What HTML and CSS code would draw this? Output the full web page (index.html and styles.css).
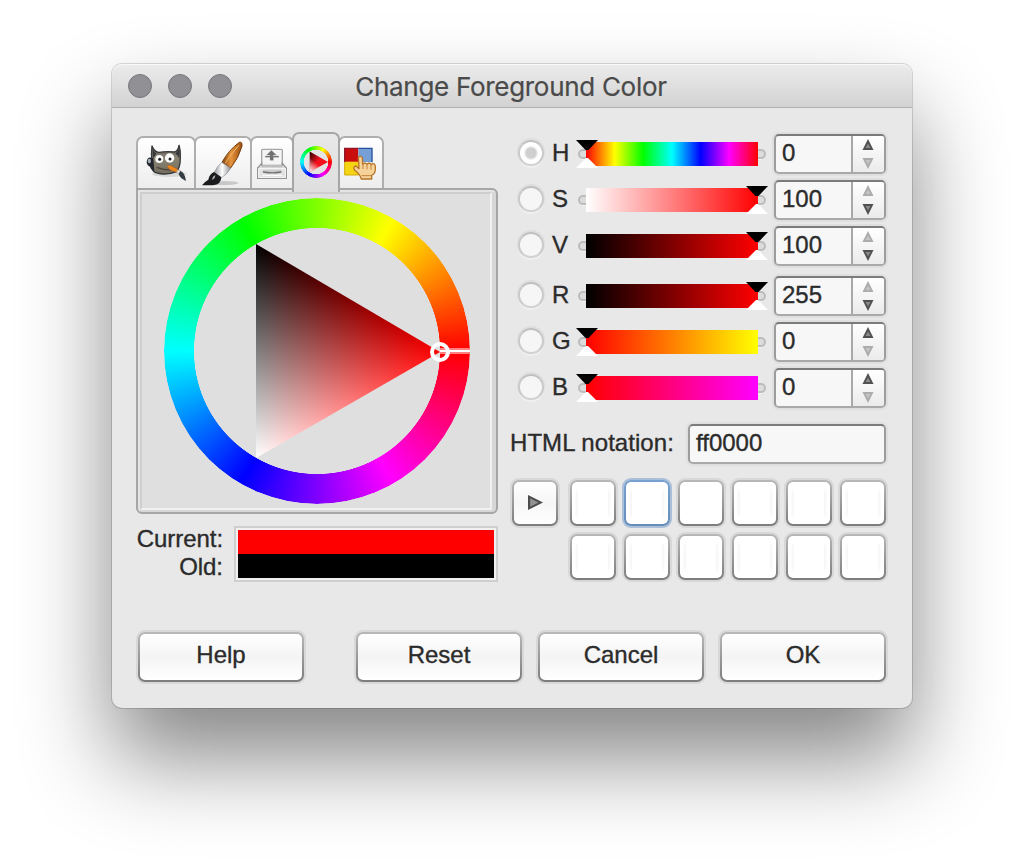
FILE: index.html
```html
<!DOCTYPE html>
<html lang="en">
<head>
<meta charset="utf-8">
<title>Change Foreground Color</title>
<link rel="stylesheet" href="styles.css">
</head>
<body>
<svg class="defs" width="0" height="0" aria-hidden="true">
  <defs>
    <g id="groove"><rect x="2" y="12" width="186" height="8" rx="4" fill="#dcdcdc" stroke="#bcbcbc" stroke-width="2"/><path d="M5 21.500H185" stroke="#f4f4f4" fill="none"/></g>
    <g id="handle"><path d="M0 0H22L12.500 10H9.500Z" fill="#000"/><path d="M0 28H22L12 18H10Z" fill="#fff"/></g>
    <g id="up-on"><path d="M5.500 0L11 11H0Z" fill="#505050"/><path d="M5.500 4.500L8 9H3Z" fill="#8a8a8a"/></g>
    <g id="up-off"><path d="M5.500 0L11 11H0Z" fill="#acacac"/><path d="M5.500 4.500L8 9H3Z" fill="#c4c4c4"/></g>
    <g id="down-on"><path d="M0 0H11L5.500 11Z" fill="#505050"/><path d="M3 2H8L5.500 6.500Z" fill="#8a8a8a"/></g>
    <g id="down-off"><path d="M0 0H11L5.500 11Z" fill="#acacac"/><path d="M3 2H8L5.500 6.500Z" fill="#c4c4c4"/></g>
    <linearGradient id="hue"><stop offset="0" stop-color="#f00"/><stop offset=".1667" stop-color="#ff0"/><stop offset=".3333" stop-color="#0f0"/><stop offset=".5" stop-color="#0ff"/><stop offset=".6667" stop-color="#00f"/><stop offset=".8333" stop-color="#f0f"/><stop offset="1" stop-color="#f00"/></linearGradient>
    <linearGradient id="sat"><stop stop-color="#fff"/><stop offset="1" stop-color="#f00"/></linearGradient>
    <linearGradient id="val"><stop stop-color="#000"/><stop offset="1" stop-color="#f00"/></linearGradient>
    <linearGradient id="green"><stop stop-color="#f00"/><stop offset="1" stop-color="#ff0"/></linearGradient>
    <linearGradient id="blue"><stop stop-color="#f00"/><stop offset="1" stop-color="#f0f"/></linearGradient>
  </defs>
</svg>
<main class="window">
  <header class="titlebar">
    <div class="lights"><i></i><i></i><i></i></div>
    <h1>Change Foreground Color</h1>
  </header>
  <div class="content">
    <div class="columns">
      <section class="left">
        <nav class="tabs">
          <div class="tab tab-gimp">
            <svg width="43" height="40" viewBox="45 50 129 120">
              <defs><linearGradient id="fur" x1="0" y1="0" x2="0" y2="1"><stop stop-color="#55534e"/><stop offset=".45" stop-color="#8a8474"/><stop offset="1" stop-color="#726c5c"/></linearGradient></defs>
              <ellipse cx="118" cy="143" rx="52" ry="9" fill="#000" opacity=".1"/>
              <path d="M66 58Q72 76 86 78Q112 74 134 77Q146 72 147 56Q152 72 151 94Q151 124 139 136Q122 144 98 143Q76 141 70 134Q64 124 66 104Q63 84 66 58Z" fill="url(#fur)" stroke="#38393a" stroke-width="4"/>
              <path d="M68 70L79 83Q70 91 69 99ZM148 68L148 99Q145 86 136 82Z" fill="#34373a"/>
              <path d="M70 96Q51 88 50 108Q51 118 60 121Q64 133 73 134Z" fill="#20262b"/>
              <ellipse cx="58" cy="104" rx="5" ry="7" fill="#a0abb1"/>
              <circle cx="88" cy="98" r="12" fill="#f7f7f5"/>
              <circle cx="119" cy="95" r="14" fill="#fff"/>
              <circle cx="89" cy="99" r="4.500" fill="#1e1e1e"/><circle cx="120" cy="98" r="4.500" fill="#1e1e1e"/>
              <path d="M80 123Q101 131 123 131" stroke="#4a453b" stroke-width="4" fill="none"/>
              <path d="M111 119L121 117L148 132L143 139L119 130Z" fill="#ef861c" stroke="#a64f0b" stroke-width="1"/>
              <path d="M142 131L151 132L154 142L147 144L139 138Z" fill="#d6dadb" stroke="#777" stroke-width="1"/>
              <path d="M151 134Q164 137 168 164Q150 156 146 143Z" fill="#353d42"/>
            </svg>
          </div>
          <div class="tab tab-brush">
            <svg width="44" height="47" viewBox="207 45 132 141">
              <defs><linearGradient id="wood"><stop stop-color="#854311"/><stop offset=".45" stop-color="#e5953c"/><stop offset="1" stop-color="#9a4d13"/></linearGradient><linearGradient id="ferrule"><stop stop-color="#92979b"/><stop offset=".5" stop-color="#fff"/><stop offset="1" stop-color="#8b8e91"/></linearGradient></defs>
              <ellipse cx="275" cy="174" rx="44" ry="6" fill="#000" opacity=".16"/>
              <path d="M270 112Q290 75 322 52Q331 49 330 63Q321 98 296 129Z" fill="url(#wood)" stroke="#74400f" stroke-width="3"/>
              <path d="M280 114Q298 86 321 61" stroke="#f2b66a" stroke-width="3" fill="none"/>
              <path d="M269 112L296 130Q286 148 268 158L246 143Q254 126 269 112Z" fill="url(#ferrule)" stroke="#898d90" stroke-width="2"/>
              <path d="M246 141L268 157Q268 178 243 181H210Q216 171 229 164Q232 147 246 141Z" fill="#191b1c"/>
              <path d="M240 164Q243 152 250 151Q249 163 240 164Z" fill="#b3b6b7"/>
            </svg>
          </div>
          <div class="tab tab-print">
            <svg width="32" height="32" viewBox="36 72 96 96">
              <rect x="53" y="76" width="62" height="53" rx="3" fill="#f5f5f5" stroke="#a6a6a6" stroke-width="4"/>
              <path d="M82 79L97 93H87V96H104V100H88V109H78V100H64V96H78V93H68Z" fill="#6f6f6f" stroke="#999" stroke-width="1"/>
              <path d="M53 118L41 132V163H127V132L115 118V124H53Z" fill="#e1e1e1" stroke="#949494" stroke-width="4"/>
              <path d="M53 123H116V130H53Z" fill="#bdbdbd"/><rect x="44" y="134" width="80" height="26" fill="none" stroke="#f8f8f8" stroke-width="3"/>
              <rect x="56" y="137" width="57" height="10" rx="4" fill="#cacaca"/><path d="M57 144Q85 149 112 144" stroke="#747474" stroke-width="4" fill="none"/>
              <path d="M55 154H114" stroke="#fff" stroke-width="3"/>
            </svg>
          </div>
          <div class="tab tab-wheel active">
            <span class="mini-wheel"></span>
            <svg width="32" height="32" viewBox="0 0 32 32"><defs><linearGradient id="minired" x1="0" y1="0" x2=".5" y2=".4"><stop stop-color="#200"/><stop offset="1" stop-color="#f4101c"/></linearGradient><linearGradient id="minipale" x1="0" y1="1" x2=".35" y2=".55"><stop stop-color="#fff"/><stop offset="1" stop-color="#fff" stop-opacity="0"/></linearGradient></defs><circle cx="16" cy="16" r="15.400" fill="none" stroke="#333" stroke-width=".8" opacity=".5"/><path d="M9.700 5.500L28 16L9.700 26Z" fill="url(#minired)"/><path d="M9.700 5.500L28 16L9.700 26Z" fill="url(#minipale)"/></svg>
          </div>
          <div class="tab tab-palette">
            <svg width="33" height="33" viewBox="297 67 99 99">
              <rect x="299" y="70" width="41" height="42" fill="#c90c0c"/><rect x="340" y="70" width="41" height="42" fill="#769fd6"/><rect x="299" y="111" width="42" height="40" fill="#f5d414"/>
              <path d="M340 71H381V113" fill="none" stroke="#24509c" stroke-width="4"/>
              <path d="M299 112V71H340" fill="none" stroke="#8c1830" stroke-width="4"/><path d="M299 112V151H340" stroke="#d3ab0c" stroke-width="3" fill="none"/>
              <path d="M340 98Q346 92 352 99L353 119Q359 111 366 119Q372 111 378 119Q390 112 391 126Q393 147 380 152V163H349Q345 149 329 137Q323 126 333 124L342 132Z" fill="#f7d39c" stroke="#b77425" stroke-width="4" stroke-linejoin="round"/>
              <path d="M354 117V133M366 119V134M378 119V135M350 153H378" fill="none" stroke="#c1813a" stroke-width="3"/>
            </svg>
          </div>
        </nav>
        <div class="panel"><div class="panel-inner">
          <div class="wheel">
            <div class="ring"></div>
            <svg class="triangle" width="306" height="306" viewBox="164 198 306 306">
              <defs>
                <clipPath id="tri"><path d="M256 244L440 352L256 458Z"/></clipPath>
                <linearGradient id="redness" gradientUnits="userSpaceOnUse" x1="256" y1="0" x2="440" y2="0"><stop stop-color="#000"/><stop offset="1" stop-color="#f00"/></linearGradient>
                <linearGradient id="whiteness" gradientUnits="userSpaceOnUse" x1="256" y1="244" x2="162.600" y2="403.200"><stop stop-color="#000"/><stop offset="1" stop-color="#fff"/></linearGradient>
              </defs>
              <g class="blend" clip-path="url(#tri)"><rect x="256" y="244" width="184" height="214" fill="url(#redness)"/><rect class="add" x="256" y="244" width="184" height="214" fill="url(#whiteness)"/></g>
              <rect x="440" y="348" width="30" height="6" fill="#ff8080"/><rect x="440" y="350" width="30" height="2" fill="#fff"/>
              <circle cx="440" cy="352" r="8" fill="none" stroke="#fff" stroke-width="4"/>
            </svg>
          </div>
        </div></div>
        <div class="compare">
          <div class="labels"><span>Current:</span><span>Old:</span></div>
          <div class="swatches"><div class="current"></div><div class="old"></div></div>
        </div>
      </section>
      <section class="right">
        <div class="row"><span class="radio on"></span><label>H</label>
          <svg width="194" height="32"><use href="#groove" x="1"/><rect x="10" y="4" width="172" height="24" fill="url(#hue)"/><use href="#handle" x="0" y="2"/></svg>
          <div class="spin"><span>0</span><svg width="33" height="36"><use href="#up-on" x="9.500" y="3"/><use href="#down-off" x="9.500" y="22"/></svg></div></div>
        <div class="row"><span class="radio"></span><label>S</label>
          <svg width="194" height="32"><use href="#groove" x="1"/><rect x="10" y="4" width="172" height="24" fill="url(#sat)"/><use href="#handle" x="170" y="2"/></svg>
          <div class="spin"><span>100</span><svg width="33" height="36"><use href="#up-off" x="9.500" y="3"/><use href="#down-on" x="9.500" y="22"/></svg></div></div>
        <div class="row"><span class="radio"></span><label>V</label>
          <svg width="194" height="32"><use href="#groove" x="1"/><rect x="10" y="4" width="172" height="24" fill="url(#val)"/><use href="#handle" x="170" y="2"/></svg>
          <div class="spin"><span>100</span><svg width="33" height="36"><use href="#up-off" x="9.500" y="3"/><use href="#down-on" x="9.500" y="22"/></svg></div></div>
        <div class="row rgb"><span class="radio"></span><label>R</label>
          <svg width="194" height="32"><use href="#groove" x="1"/><rect x="10" y="4" width="172" height="24" fill="url(#val)"/><use href="#handle" x="170" y="2"/></svg>
          <div class="spin"><span>255</span><svg width="33" height="36"><use href="#up-off" x="9.500" y="3"/><use href="#down-on" x="9.500" y="22"/></svg></div></div>
        <div class="row"><span class="radio"></span><label>G</label>
          <svg width="194" height="32"><use href="#groove" x="1"/><rect x="10" y="4" width="172" height="24" fill="url(#green)"/><use href="#handle" x="0" y="2"/></svg>
          <div class="spin"><span>0</span><svg width="33" height="36"><use href="#up-on" x="9.500" y="3"/><use href="#down-off" x="9.500" y="22"/></svg></div></div>
        <div class="row"><span class="radio"></span><label>B</label>
          <svg width="194" height="32"><use href="#groove" x="1"/><rect x="10" y="4" width="172" height="24" fill="url(#blue)"/><use href="#handle" x="0" y="2"/></svg>
          <div class="spin"><span>0</span><svg width="33" height="36"><use href="#up-on" x="9.500" y="3"/><use href="#down-off" x="9.500" y="22"/></svg></div></div>
        <div class="notation"><label>HTML notation:</label><div class="entry">ff0000</div></div>
        <div class="history">
          <div class="box add-color"><svg width="16" height="16" viewBox="-1 0 16 16"><path d="M0 0L15 7.500L0 15Z" fill="#4c4c4c"/><path d="M2.200 3.200L10.500 7.500L2.200 11.800Z" fill="#929292"/></svg></div>
          <div class="grid">
            <div class="box"><i></i></div><div class="box focus"><i></i></div><div class="box"></div><div class="box"><i></i></div><div class="box"><i></i></div><div class="box"><i></i></div>
            <div class="box"><i></i></div><div class="box"><i></i></div><div class="box"><i></i></div><div class="box"><i></i></div><div class="box"><i></i></div><div class="box"><i></i></div>
          </div>
        </div>
      </section>
    </div>
    <footer class="actions">
      <button class="help">Help</button><button>Reset</button><button>Cancel</button><button>OK</button>
    </footer>
  </div>
</main>
</body>
</html>
```
FILE: styles.css
```css
* { box-sizing: border-box; }
html, body { height: 868px; overflow: hidden; }
body { margin: 0; padding: 64px 112px; background: #fff; color: #2b2b2b; font: 24px "Liberation Sans", Arial, sans-serif; -webkit-text-stroke: .35px #2b2b2b; }
svg { display: block; flex: none; }
.defs { position: absolute; }
.window { width: 800px; height: 644px; border-radius: 10px; background: #e8e8e8; box-shadow: 0 0 0 1px rgba(0,0,0,.14), 0 50px 90px rgba(0,0,0,.48); }
.titlebar { height: 44px; display: grid; grid-template-columns: 120px 1fr 120px; align-items: center; padding: 0 16px; border-radius: 10px 10px 0 0; background: linear-gradient(#ececec, #d2d2d2); border-bottom: 1px solid #b0b0b0; box-shadow: inset 0 1px #f8f8f8; }
.lights { display: flex; gap: 16px; }
.lights i { width: 24px; height: 24px; border-radius: 50%; background: #919195; border: 1px solid #77777b; }
h1 { margin: 0; padding: 2px 2px 0 0; text-align: center; white-space: nowrap; font: 400 26px/32px Inter, sans-serif; letter-spacing: -.3px; color: #4a4a4a; -webkit-text-stroke: .2px #4a4a4a; }
.content { padding: 24px 26px 26px 24px; }
.columns { display: flex; justify-content: space-between; height: 450px; }
.left { width: 362px; }
.tabs { display: flex; align-items: flex-end; height: 56px; position: relative; }
.tab { height: 52px; border: 2px solid #afafaf; border-bottom: 0; border-radius: 7px 7px 0 0; background: linear-gradient(#fff, #ededed); display: grid; place-items: center; margin-right: -2px; }
.tab-gimp { width: 60px; }
.tab-brush { width: 58px; }
.tab-print { width: 44px; padding-top: 2px; }
.tab-wheel { width: 48px; }
.tab-palette { width: 46px; padding-right: 1px; }
.tab.active { height: 60px; margin-bottom: -4px; border-color: #a6a6a6; background: linear-gradient(#e8e8e8, #dedede); z-index: 1; padding-bottom: 2px; }
.active > * { grid-area: 1 / 1; }
.mini-wheel { width: 32px; height: 32px; border-radius: 50%; background: conic-gradient(from 90deg, #f00, #f0f, #00f, #0ff, #0f0, #ff0, #f00); -webkit-mask: radial-gradient(circle, transparent 12px, #000 12.500px); mask: radial-gradient(circle, transparent 12px, #000 12.500px); }
.panel { height: 326px; border: 2px solid #a6a6a6; border-radius: 0 6px 6px 6px; background: #d7d7d7; padding: 2px 4px 4px 2px; box-shadow: inset 2px 2px #e4e4e4; }
.panel-inner { height: 318px; border: 2px solid; border-color: #cecece #f1f1f1 #f1f1f1 #cecece; background: #dfdfdf; padding: 4px 0 0 22px; }
.wheel { display: grid; width: 306px; height: 306px; }
.wheel > * { grid-area: 1 / 1; }
.ring { border-radius: 50%; background: conic-gradient(from 90deg, #f00, #f0f, #00f, #0ff, #0f0, #ff0, #f00); -webkit-mask: radial-gradient(circle, transparent 122.700px, #000 123.300px); mask: radial-gradient(circle, transparent 122.700px, #000 123.300px); }
.triangle { z-index: 1; }
.blend { isolation: isolate; }
.add { mix-blend-mode: plus-lighter; }
.compare { display: flex; justify-content: space-between; margin-top: 12px; height: 56px; }
.labels { display: flex; flex-direction: column; width: 87px; text-align: right; line-height: 28px; margin-top: -1px; letter-spacing: -.05px; white-space: nowrap; align-items: flex-end; }
.swatches { width: 264px; border: 2px solid #cfcfcf; padding: 2px; background: #f0f0f0; }
.swatches div { height: 24px; }
.current { background: #f00; }
.old { background: #000; }
.right { width: 376px; padding-top: 2px; }
.row { display: flex; align-items: center; height: 40px; margin-bottom: 6px; padding-left: 8px; }
.row.rgb { margin-top: 10px; }
.row label { width: 24px; margin-left: 8px; padding-bottom: 3px; white-space: nowrap; }
.radio { width: 26px; height: 26px; flex: none; margin-bottom: 2px; border: 2px solid; border-color: #bfbfbf #cacaca #d2d2d2; border-radius: 50%; background: #f6f6f6; box-shadow: 0 -1px 0 1px #dedede, 0 2px #f0f0f0; }
.radio.on { background: radial-gradient(circle, #cfcfcf 5px, #e9e9e9 6px, #fff 7.500px); }
.spin, .entry { border: 2px solid; border-color: #7b7b7b #9c9c9c #a9a9a9; border-radius: 5px; background: #f7f7f7; box-shadow: 0 0 0 2px #dfdfdf; }
.spin { width: 112px; height: 40px; display: flex; margin-left: 4px; overflow: hidden; }
.spin span { flex: 1; line-height: 33px; padding-left: 6px; }
.spin svg { width: 33px; border-left: 2px solid #a8a8a8; background: linear-gradient(#fff, #ebebeb); }
.notation { display: flex; justify-content: space-between; margin-top: 16px; line-height: 37px; }
.notation label { white-space: nowrap; letter-spacing: .05px; }
.entry { width: 198px; height: 40px; line-height: 33px; padding-left: 6px; }
.history { display: flex; justify-content: space-between; margin-top: 16px; padding-left: 2px; }
.grid { display: grid; grid-template-columns: repeat(6, 46px); gap: 8px; }
.box, button { border: 2px solid transparent; border-radius: 7px; background: linear-gradient(#fff, #fff) padding-box, linear-gradient(#b8b8b8, #7c7c7c) border-box; box-shadow: 0 0 0 2px #d8d8d8; }
.box { width: 46px; height: 46px; display: grid; place-items: center; }
.box i { width: 30px; height: 30px; background: #fff; box-shadow: -4px 0 3px -2px #f5f5f5, 4px 0 3px -2px #f5f5f5; }
.add-color { background: linear-gradient(#fff, #f6f6f6 50%, #fff) padding-box, linear-gradient(#b8b8b8, #7c7c7c) border-box; }
.box.focus { background: linear-gradient(#fff, #fff) padding-box, linear-gradient(#78a2cf, #658cba) border-box; box-shadow: 0 0 0 2px #aac0d9; }
.actions { display: flex; gap: 16px; margin: 50px 0 0 2px; }
button { width: 166px; height: 50px; padding: 0 0 4px; font: inherit; color: inherit; -webkit-text-stroke: inherit; background: linear-gradient(#fff, #f4f4f4 50%, #fff) padding-box, linear-gradient(#b8b8b8, #7c7c7c) border-box; }
.help { margin-right: 36px; }
```
